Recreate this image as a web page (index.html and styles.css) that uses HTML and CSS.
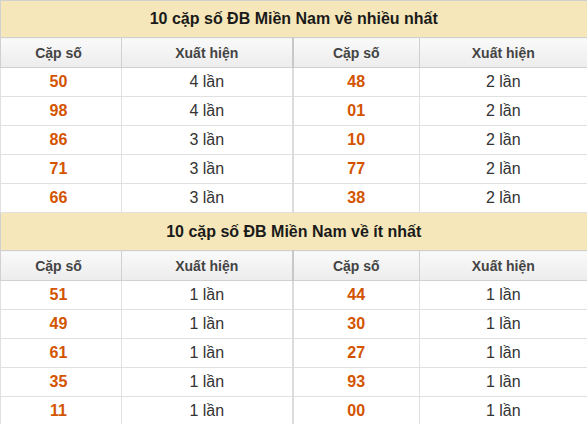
FILE: index.html
```html
<!DOCTYPE html>
<html lang="vi">
<head>
<meta charset="utf-8">
<link rel="stylesheet" href="styles.css">
</head>
<body>
<table class="stats">
  <colgroup>
    <col class="c1"><col class="c2"><col class="c3"><col class="c4">
  </colgroup>
  <tr class="title"><td colspan="4">10 cặp số ĐB Miền Nam về nhiều nhất</td></tr>
  <tr class="head"><th class="first">Cặp số</th><th>Xuất hiện</th><th class="split">Cặp số</th><th>Xuất hiện</th></tr>
  <tr><td class="num first">50</td><td>4 lần</td><td class="num split">48</td><td>2 lần</td></tr>
  <tr><td class="num first">98</td><td>4 lần</td><td class="num split">01</td><td>2 lần</td></tr>
  <tr><td class="num first">86</td><td>3 lần</td><td class="num split">10</td><td>2 lần</td></tr>
  <tr><td class="num first">71</td><td>3 lần</td><td class="num split">77</td><td>2 lần</td></tr>
  <tr><td class="num first">66</td><td>3 lần</td><td class="num split">38</td><td>2 lần</td></tr>
  <tr class="title t2"><td colspan="4">10 cặp số ĐB Miền Nam về ít nhất</td></tr>
  <tr class="head"><th class="first">Cặp số</th><th>Xuất hiện</th><th class="split">Cặp số</th><th>Xuất hiện</th></tr>
  <tr><td class="num first">51</td><td>1 lần</td><td class="num split">44</td><td>1 lần</td></tr>
  <tr><td class="num first">49</td><td>1 lần</td><td class="num split">30</td><td>1 lần</td></tr>
  <tr><td class="num first">61</td><td>1 lần</td><td class="num split">27</td><td>1 lần</td></tr>
  <tr><td class="num first">35</td><td>1 lần</td><td class="num split">93</td><td>1 lần</td></tr>
  <tr class="last"><td class="num first">11</td><td>1 lần</td><td class="num split">00</td><td>1 lần</td></tr>
</table>
</body>
</html>
```
FILE: styles.css
```css
html, body {
  margin: 0;
  padding: 0;
  background: #fff;
}
body {
  font-family: "Liberation Sans", Arial, sans-serif;
}
.stats {
  width: 587px;
  border-collapse: collapse;
  table-layout: fixed;
  border-left: 1px solid #c4c4c4;
  border-right: 2px solid #b8b8b8;
  border-bottom: 2px solid #b8b8b8;
  border-top: 1px solid #c4c4c4;
}
.c1 { width: 121px; }
.c2 { width: 171px; }
.c3 { width: 127px; }
.c4 { width: 168px; }
.stats td, .stats th {
  padding: 0;
  text-align: center;
  border: 1px solid #e0e0e0;
}
.stats .first {
  padding-right: 5px;
}
.stats tr { height: 29px; }
.stats td {
  font-size: 16px;
  color: #333;
}
.title td {
  height: 36px;
  background: #f5e7b9;
  font-size: 16px;
  font-weight: bold;
  color: #1a1a1a;
  border-color: #d0d0d0;
}
.t2 td { height: 37px; }
.head th {
  height: 29px;
  font-size: 14px;
  font-weight: bold;
  color: #444;
  background: linear-gradient(#fafafa, #ececec);
  border-color: #d0d0d0;
}
.head th.split {
  border-left: 2px solid #c8c8c8;
}
.stats td.split {
  border-left: 2px solid #dcdcdc;
}
.stats td.num {
  color: #d35400;
  font-weight: bold;
}
.last { height: 26px; }
```
